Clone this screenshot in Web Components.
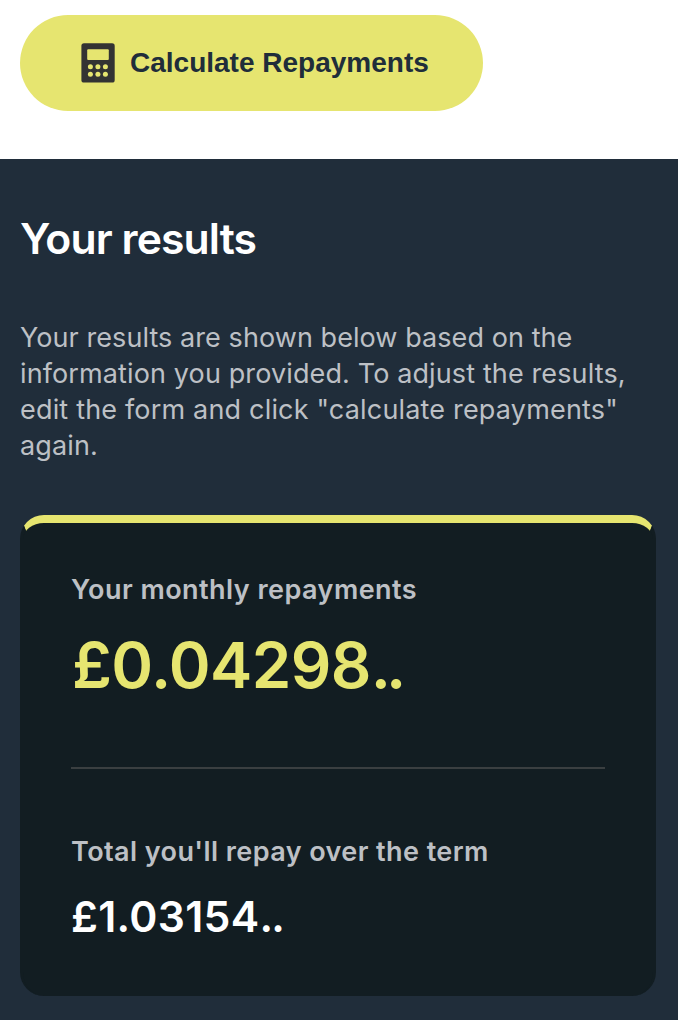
<!DOCTYPE html>
<html lang="en">
<head>
<meta charset="utf-8">
<title>Repayment calculator</title>
<style>
  html, body { margin: 0; padding: 0; background: #fff; }
  body { font-family: Inter, "Liberation Sans", sans-serif; height: 1020px; overflow: hidden; }
</style>
</head>
<body>
<repayment-app></repayment-app>
<script>
class CalculatorIcon extends HTMLElement {
  constructor() {
    super();
    this.attachShadow({ mode: "open" }).innerHTML = `
      <style>:host { display: block; width: 34px; height: 40px; } svg { display: block; }</style>
      <svg width="34" height="40" viewBox="0 0 34 40" aria-hidden="true">
        <rect x=".4" y=".3" width="33.3" height="39.3" rx="2.6" fill="#333"/>
        <rect x="6.2" y="6.3" width="21.6" height="10.7" rx="1" fill="#e6e570"/>
        <g fill="#e6e570">
          <circle cx="9.4" cy="23.7" r="2.5"/><circle cx="16.9" cy="23.7" r="2.5"/><circle cx="24.4" cy="23.7" r="2.5"/>
          <circle cx="9.4" cy="31.3" r="2.5"/><circle cx="16.9" cy="31.3" r="2.5"/><circle cx="24.4" cy="31.3" r="2.5"/>
        </g>
      </svg>`;
  }
}
customElements.define("calculator-icon", CalculatorIcon);

class PillButton extends HTMLElement {
  constructor() {
    super();
    this.attachShadow({ mode: "open" }).innerHTML = `
      <style>
        :host { display: block; }
        button { display: flex; align-items: center; gap: 15px; box-sizing: border-box; width: 463px; height: 96px;
          padding: 0 0 0 61px; border: 0; border-radius: 48px; background: #e6e570; color: #202d3a;
          font: bold 28px/36px "Liberation Sans", Arial, sans-serif; white-space: nowrap; }
      </style>
      <button type="button"><slot name="icon"></slot><span><slot></slot></span></button>`;
  }
}
customElements.define("pill-button", PillButton);

class ResultItem extends HTMLElement {
  constructor() {
    super();
    this.attachShadow({ mode: "open" }).innerHTML = `
      <style>
        :host { display: block; white-space: nowrap; }
        .label { font-size: 27px; font-weight: 600; line-height: 36px; color: #bdc0c5; letter-spacing: .42px; }
        .value { font-size: 42.7px; font-weight: 600; line-height: 52px; color: #fff; margin-top: 21px; letter-spacing: .3px; }
        :host([primary]) .label { letter-spacing: .46px; }
        :host([primary]) .value { font-size: 63.5px; line-height: 76px; color: #e6e570; margin-top: 19px; padding-left: 1px; letter-spacing: -.6px; }
      </style>
      <div class="label"><slot name="label"></slot></div>
      <div class="value"><slot></slot></div>`;
  }
}
customElements.define("result-item", ResultItem);

class ResultCard extends HTMLElement {
  constructor() {
    super();
    this.attachShadow({ mode: "open" }).innerHTML = `
      <style>
        :host { display: block; box-sizing: border-box; height: 481px; padding: 49px 48px 0; background: #121d22;
          border: 3px solid #121d22; border-bottom: 0; border-top: 8px solid #e6e570; border-radius: 24px; }
        hr { margin: 64px 0 65px; border: 0; height: 2px; background: #3a3f41; }
      </style>
      <slot name="primary"></slot><hr><slot></slot>`;
  }
}
customElements.define("result-card", ResultCard);

class ResultsPanel extends HTMLElement {
  constructor() {
    super();
    this.attachShadow({ mode: "open" }).innerHTML = `
      <style>
        :host { display: block; box-sizing: border-box; height: 861px; padding: 54px 22px 0 20px; background: #202d3a; }
        h2 { margin: 0; font-size: 42.7px; line-height: 52px; font-weight: 600; color: #fff; letter-spacing: -.9px; }
        p { margin: 55px 0 51px; font-size: 27px; line-height: 36px; color: #bdc0c5; letter-spacing: .12px; white-space: nowrap; }
      </style>
      <h2><slot name="title"></slot></h2>
      <p><slot name="intro"></slot></p>
      <slot></slot>`;
  }
}
customElements.define("results-panel", ResultsPanel);

class RepaymentApp extends HTMLElement {
  constructor() {
    super();
    this.attachShadow({ mode: "open" }).innerHTML = `
      <style>
        :host { display: block; }
        pill-button { padding: 15px 20px 48px; }
        .first { letter-spacing: .07px; }
        .third { letter-spacing: .18px; }
        .tail { letter-spacing: -5px; }
        .tail.small { letter-spacing: -1.8px; }
      </style>
      <pill-button><calculator-icon slot="icon"></calculator-icon>Calculate Repayments</pill-button>
      <results-panel>
        <span slot="title">Your results</span>
        <span slot="intro"><span class="first">Your results are shown below based on the</span><br>information you provided. To adjust the results,<br><span class="third">edit the form and click "calculate repayments"</span><br>again.</span>
        <result-card>
          <result-item slot="primary" primary><span slot="label">Your monthly repayments</span>£0.04298<span class="tail">..</span></result-item>
          <result-item><span slot="label">Total you'll repay over the term</span>£1.03154<span class="tail small">..</span></result-item>
        </result-card>
      </results-panel>`;
  }
}
customElements.define("repayment-app", RepaymentApp);
</script>
</body>
</html>
